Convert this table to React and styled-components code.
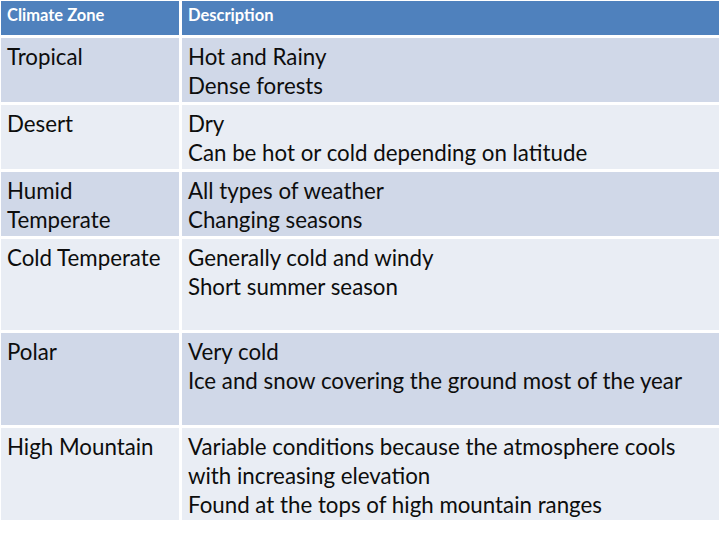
import React from "react"
import styled, { createGlobalStyle } from "styled-components"

const GlobalStyle = createGlobalStyle`
  html, body {
    margin: 0;
    padding: 0;
    background: #ffffff;
  }
  body {
    font-family: Lato, "Liberation Sans", sans-serif;
  }
`

const zones = [
  { name: "Tropical", lines: ["Hot and Rainy", "Dense forests"], height: 64 },
  {
    name: "Desert",
    lines: ["Dry", "Can be hot or cold depending on latitude"],
    height: 64,
  },
  {
    name: "Humid\nTemperate",
    lines: ["All types of weather", "Changing seasons"],
    height: 64,
  },
  {
    name: "Cold Temperate",
    lines: ["Generally cold and windy", "Short summer season"],
    height: 91,
  },
  {
    name: "Polar",
    lines: ["Very cold", "Ice and snow covering the ground most of the year"],
    height: 92,
  },
  {
    name: "High Mountain",
    lines: [
      "Variable conditions because the atmosphere cools",
      "with increasing elevation",
      "Found at the tops of high mountain ranges",
    ],
    height: 92,
  },
]

const App = () => {
  return (
    <>
      <GlobalStyle />
      <Table>
        <HeadCell>Climate Zone</HeadCell>
        <HeadCell>Description</HeadCell>
        {zones.map(({ name, lines, height }, i) => (
          <React.Fragment key={name}>
            <Cell $dark={i % 2 === 0} $height={height}>
              {name}
            </Cell>
            <Cell $dark={i % 2 === 0} $height={height}>
              {lines.join("\n")}
            </Cell>
          </React.Fragment>
        ))}
      </Table>
    </>
  )
}

export default App

const Table = styled.div`
  display: grid;
  grid-template-columns: 178px 537px;
  gap: 3px;
  margin: 1px 0 0 1px;
  width: 718px;
`

const HeadCell = styled.div`
  height: 34px;
  box-sizing: border-box;
  padding: 5px 6px 0;
  background: #4f81bd;
  color: #ffffff;
  font-weight: 700;
  font-size: 16.5px;
  line-height: 19px;
`

const Cell = styled.div`
  height: ${props => props.$height}px;
  box-sizing: border-box;
  padding: 4px 6px 0;
  background: ${props => (props.$dark ? "#d0d8e8" : "#e9edf4")};
  color: #0d0d0d;
  font-size: 22.3px;
  line-height: 29px;
  white-space: pre-line;
`
